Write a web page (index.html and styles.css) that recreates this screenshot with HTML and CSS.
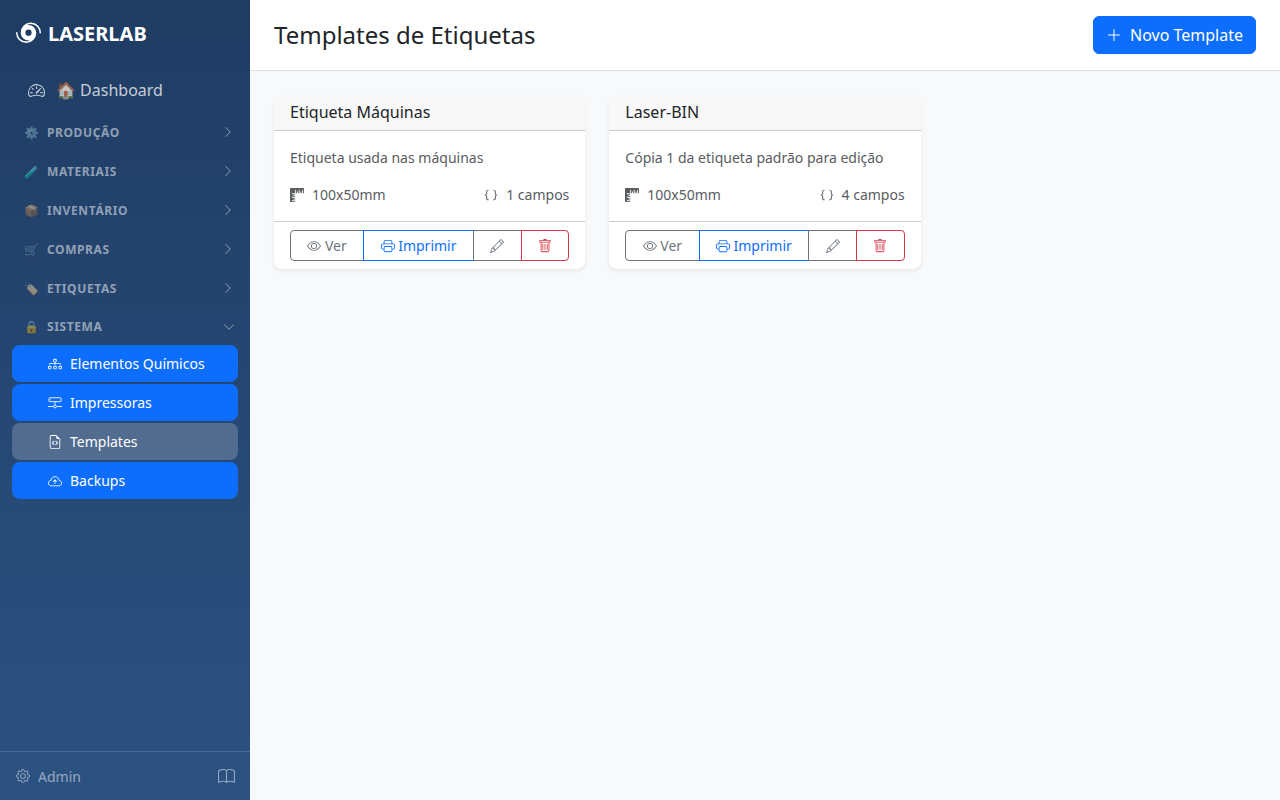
FILE: index.html
```html
<!DOCTYPE html>
<html lang="pt">
<head>
    <meta charset="UTF-8">
    <meta name="viewport" content="width=device-width, initial-scale=1.0">
    <title>Templates de Etiquetas</title>
    <link rel="stylesheet" href="styles.css">
</head>
<body>
    <svg class="icon-defs" xmlns="http://www.w3.org/2000/svg">
        <symbol id="i-hurricane" viewBox="0 0 16 16"><path d="M6.999 2.6A5.5 5.5 0 0 1 15 7.5a.5.5 0 0 0 1 0 6.5 6.5 0 1 0-13 0 5 5 0 0 0 6.001 4.9A5.5 5.5 0 0 1 1 7.5a.5.5 0 0 0-1 0 6.5 6.5 0 1 0 13 0 5 5 0 0 0-6.001-4.9M10 7.5a2 2 0 1 1-4 0 2 2 0 0 1 4 0"/></symbol>
        <symbol id="i-speedometer" viewBox="0 0 16 16"><path d="M8 4a.5.5 0 0 1 .5.5V6a.5.5 0 0 1-1 0V4.5A.5.5 0 0 1 8 4M3.732 5.732a.5.5 0 0 1 .707 0l.915.914a.5.5 0 1 1-.708.708l-.914-.915a.5.5 0 0 1 0-.707M2 10a.5.5 0 0 1 .5-.5h1.586a.5.5 0 0 1 0 1H2.5A.5.5 0 0 1 2 10m9.5 0a.5.5 0 0 1 .5-.5h1.5a.5.5 0 0 1 0 1H12a.5.5 0 0 1-.5-.5m.754-4.246a.39.39 0 0 0-.527-.02L7.547 9.31a.91.91 0 1 0 1.302 1.258l3.434-4.297a.39.39 0 0 0-.029-.518z"/><path fill-rule="evenodd" d="M0 10a8 8 0 1 1 15.547 2.661c-.442 1.253-1.845 1.602-2.932 1.25C11.309 13.488 9.475 13 8 13c-1.474 0-3.31.488-4.615.911-1.087.352-2.49.003-2.932-1.25A8 8 0 0 1 0 10m8-7a7 7 0 0 0-6.603 9.329c.203.575.923.876 1.68.63C4.397 12.533 6.358 12 8 12s3.604.532 4.923.96c.757.245 1.477-.056 1.68-.631A7 7 0 0 0 8 3"/></symbol>
        <symbol id="i-right" viewBox="0 0 16 16"><path fill-rule="evenodd" d="M4.646 1.646a.5.5 0 0 1 .708 0l6 6a.5.5 0 0 1 0 .708l-6 6a.5.5 0 0 1-.708-.708L10.293 8 4.646 2.354a.5.5 0 0 1 0-.708"/></symbol>
        <symbol id="i-down" viewBox="0 0 16 16"><path fill-rule="evenodd" d="M1.646 4.646a.5.5 0 0 1 .708 0L8 10.293l5.646-5.647a.5.5 0 0 1 .708.708l-6 6a.5.5 0 0 1-.708 0l-6-6a.5.5 0 0 1 0-.708"/></symbol>
        <symbol id="i-diagram" viewBox="0 0 16 16"><path fill-rule="evenodd" d="M6 3.5A1.5 1.5 0 0 1 7.5 2h1A1.5 1.5 0 0 1 10 3.5v1A1.5 1.5 0 0 1 8.5 6v1H14a.5.5 0 0 1 .5.5v1a.5.5 0 0 1-1 0V8h-5v.5a.5.5 0 0 1-1 0V8h-5v.5a.5.5 0 0 1-1 0v-1A.5.5 0 0 1 2 7h5.5V6A1.5 1.5 0 0 1 6 4.5zM8.5 5a.5.5 0 0 0 .5-.5v-1a.5.5 0 0 0-.5-.5h-1a.5.5 0 0 0-.5.5v1a.5.5 0 0 0 .5.5zM0 11.5A1.5 1.5 0 0 1 1.5 10h1A1.5 1.5 0 0 1 4 11.5v1A1.5 1.5 0 0 1 2.5 14h-1A1.5 1.5 0 0 1 0 12.5zm1.5-.5a.5.5 0 0 0-.5.5v1a.5.5 0 0 0 .5.5h1a.5.5 0 0 0 .5-.5v-1a.5.5 0 0 0-.5-.5zm4.5.5A1.5 1.5 0 0 1 7.5 10h1a1.5 1.5 0 0 1 1.5 1.5v1A1.5 1.5 0 0 1 8.5 14h-1A1.5 1.5 0 0 1 6 12.5zm1.5-.5a.5.5 0 0 0-.5.5v1a.5.5 0 0 0 .5.5h1a.5.5 0 0 0 .5-.5v-1a.5.5 0 0 0-.5-.5zm4.5.5a1.5 1.5 0 0 1 1.5-1.5h1a1.5 1.5 0 0 1 1.5 1.5v1a1.5 1.5 0 0 1-1.5 1.5h-1a1.5 1.5 0 0 1-1.5-1.5zm1.5-.5a.5.5 0 0 0-.5.5v1a.5.5 0 0 0 .5.5h1a.5.5 0 0 0 .5-.5v-1a.5.5 0 0 0-.5-.5z"/></symbol>
        <symbol id="i-hdd" viewBox="0 0 16 16"><g fill="none" stroke="currentColor"><rect x="1" y="2" width="14" height="4.5" rx="1"/><path d="M8 6.5V10M0 12h6M10 12h6"/><circle cx="8" cy="12" r="1.6"/></g><circle cx="3" cy="4.2" r=".6"/></symbol>
        <symbol id="i-file-code" viewBox="0 0 16 16"><path d="M14 4.5V14a2 2 0 0 1-2 2H4a2 2 0 0 1-2-2V2a2 2 0 0 1 2-2h5.5zm-3 0A1.5 1.5 0 0 1 9.5 3V1H4a1 1 0 0 0-1 1v12a1 1 0 0 0 1 1h8a1 1 0 0 0 1-1V4.5z"/><path d="M8.646 6.646a.5.5 0 0 1 .708 0l2 2a.5.5 0 0 1 0 .708l-2 2a.5.5 0 0 1-.708-.708L10.293 9 8.646 7.354a.5.5 0 0 1 0-.708m-1.292 0a.5.5 0 0 0-.708 0l-2 2a.5.5 0 0 0 0 .708l2 2a.5.5 0 0 0 .708-.708L5.707 9l1.647-1.646a.5.5 0 0 0 0-.708"/></symbol>
        <symbol id="i-cloud" viewBox="0 0 16 16"><path fill="none" stroke="currentColor" d="M4.4 13.5H3.8C2 13.5.5 12.2.5 10.4c0-1.6 1.2-2.8 2.7-3C3.5 5 5.6 3 8 3s4.5 2 4.8 4.4c1.5.2 2.7 1.4 2.7 3 0 1.8-1.5 3.1-3.3 3.1Z"/><path d="M7.65 6.15a.5.5 0 0 1 .7 0l2 2a.5.5 0 0 1-.7.7L8.5 7.71V11a.5.5 0 0 1-1 0V7.71L6.35 8.85a.5.5 0 1 1-.7-.7z"/></symbol>
        <symbol id="i-gear" viewBox="0 0 16 16"><path d="M8 4.754a3.246 3.246 0 1 0 0 6.492 3.246 3.246 0 0 0 0-6.492M5.754 8a2.246 2.246 0 1 1 4.492 0 2.246 2.246 0 0 1-4.492 0"/><path d="M9.796 1.343c-.527-1.79-3.065-1.79-3.592 0l-.094.319a.873.873 0 0 1-1.255.52l-.292-.16c-1.64-.892-3.433.902-2.54 2.541l.159.292a.873.873 0 0 1-.52 1.255l-.319.094c-1.79.527-1.79 3.065 0 3.592l.319.094a.873.873 0 0 1 .52 1.255l-.16.292c-.892 1.64.901 3.434 2.541 2.54l.292-.159a.873.873 0 0 1 1.255.52l.094.319c.527 1.79 3.065 1.79 3.592 0l.094-.319a.873.873 0 0 1 1.255-.52l.292.16c1.64.893 3.434-.902 2.54-2.541l-.159-.292a.873.873 0 0 1 .52-1.255l.319-.094c1.79-.527 1.79-3.065 0-3.592l-.319-.094a.873.873 0 0 1-.52-1.255l.16-.292c.893-1.64-.902-3.433-2.541-2.54l-.292.159a.873.873 0 0 1-1.255-.52zm-2.633.283c.246-.835 1.428-.835 1.674 0l.094.319a1.873 1.873 0 0 0 2.693 1.115l.291-.16c.764-.415 1.6.42 1.184 1.185l-.159.292a1.873 1.873 0 0 0 1.116 2.692l.318.094c.835.246.835 1.428 0 1.674l-.319.094a1.873 1.873 0 0 0-1.115 2.693l.16.291c.415.764-.42 1.6-1.185 1.184l-.291-.159a1.873 1.873 0 0 0-2.693 1.116l-.094.318c-.246.835-1.428.835-1.674 0l-.094-.319a1.873 1.873 0 0 0-2.692-1.115l-.292.16c-.764.415-1.6-.42-1.184-1.185l.159-.291A1.873 1.873 0 0 0 1.945 8.93l-.319-.094c-.835-.246-.835-1.428 0-1.674l.319-.094A1.873 1.873 0 0 0 3.06 4.377l-.16-.292c-.415-.764.42-1.6 1.185-1.184l.292.159a1.873 1.873 0 0 0 2.692-1.115z"/></symbol>
        <symbol id="i-book" viewBox="0 0 16 16"><path d="M1 2.828c.885-.37 2.154-.769 3.388-.893 1.33-.134 2.458.063 3.112.752v9.746c-.935-.53-2.12-.603-3.213-.493-1.18.12-2.37.461-3.287.811zm7.5-.141c.654-.689 1.782-.886 3.112-.752 1.234.124 2.503.523 3.388.893v9.923c-.918-.35-2.107-.692-3.287-.81-1.094-.111-2.278-.039-3.213.492zM8 1.783C7.015.936 5.587.81 4.287.94c-1.514.153-3.042.672-3.994 1.105A.5.5 0 0 0 0 2.5v11a.5.5 0 0 0 .707.455c.882-.4 2.303-.881 3.68-1.02 1.409-.142 2.59.087 3.223.877a.5.5 0 0 0 .78 0c.633-.79 1.814-1.019 3.222-.877 1.378.139 2.8.62 3.681 1.02A.5.5 0 0 0 16 13.5v-11a.5.5 0 0 0-.293-.455c-.952-.433-2.48-.952-3.994-1.105C10.413.809 8.985.936 8 1.783"/></symbol>
        <symbol id="i-plus" viewBox="0 0 16 16"><path fill-rule="evenodd" d="M8 2a.5.5 0 0 1 .5.5v5h5a.5.5 0 0 1 0 1h-5v5a.5.5 0 0 1-1 0v-5h-5a.5.5 0 0 1 0-1h5v-5A.5.5 0 0 1 8 2"/></symbol>
        <symbol id="i-rulers" viewBox="0 0 16 16"><path d="M1 0a1 1 0 0 0-1 1v14a1 1 0 0 0 1 1h5v-1H2v-1h4v-1H4v-1h2v-1H2v-1h4V9H4V8h2V7H2V6h4V2h1v4h1V4h1v2h1V2h1v4h1V4h1v2h1V2h1v4h1V1a1 1 0 0 0-1-1z"/></symbol>
        <symbol id="i-braces" viewBox="0 0 16 16"><path d="M2.114 8.063V7.9c1.005-.102 1.497-.615 1.497-1.6V4.503c0-1.094.39-1.538 1.354-1.538h.273V2h-.376C3.25 2 2.49 2.759 2.49 4.352v1.524c0 1.094-.376 1.456-1.49 1.456v1.299c1.114 0 1.49.362 1.49 1.456v1.524c0 1.593.759 2.352 2.372 2.352h.376v-.964h-.273c-.964 0-1.354-.444-1.354-1.538V9.663c0-.984-.492-1.497-1.497-1.6M13.886 7.9v.163c-1.005.103-1.497.616-1.497 1.6v1.798c0 1.094-.39 1.538-1.354 1.538h-.273v.964h.376c1.613 0 2.372-.759 2.372-2.352v-1.524c0-1.094.376-1.456 1.49-1.456V7.332c-1.114 0-1.49-.362-1.49-1.456V4.352C13.51 2.759 12.75 2 11.138 2h-.376v.964h.273c.964 0 1.354.444 1.354 1.538V6.3c0 .984.492 1.497 1.497 1.6"/></symbol>
        <symbol id="i-eye" viewBox="0 0 16 16"><path d="M16 8s-3-5.5-8-5.5S0 8 0 8s3 5.5 8 5.5S16 8 16 8M1.173 8a13 13 0 0 1 1.66-2.043C4.12 4.668 5.88 3.5 8 3.5s3.879 1.168 5.168 2.457A13 13 0 0 1 14.828 8q-.086.13-.195.288c-.335.48-.83 1.12-1.465 1.755C11.879 11.332 10.119 12.5 8 12.5s-3.879-1.168-5.168-2.457A13 13 0 0 1 1.172 8z"/><path d="M8 5.5a2.5 2.5 0 1 0 0 5 2.5 2.5 0 0 0 0-5M4.5 8a3.5 3.5 0 1 1 7 0 3.5 3.5 0 0 1-7 0"/></symbol>
        <symbol id="i-printer" viewBox="0 0 16 16"><path d="M2.5 8a.5.5 0 1 0 0-1 .5.5 0 0 0 0 1"/><path d="M5 1a2 2 0 0 0-2 2v2H2a2 2 0 0 0-2 2v3a2 2 0 0 0 2 2h1v1a2 2 0 0 0 2 2h6a2 2 0 0 0 2-2v-1h1a2 2 0 0 0 2-2V7a2 2 0 0 0-2-2h-1V3a2 2 0 0 0-2-2zM4 3a1 1 0 0 1 1-1h6a1 1 0 0 1 1 1v2H4zm1 5a2 2 0 0 0-2 2v1H2a1 1 0 0 1-1-1V7a1 1 0 0 1 1-1h12a1 1 0 0 1 1 1v3a1 1 0 0 1-1 1h-1v-1a2 2 0 0 0-2-2zm7 2v3a1 1 0 0 1-1 1H5a1 1 0 0 1-1-1v-3a1 1 0 0 1 1-1h6a1 1 0 0 1 1 1"/></symbol>
        <symbol id="i-pencil" viewBox="0 0 16 16"><path d="M12.146.146a.5.5 0 0 1 .708 0l3 3a.5.5 0 0 1 0 .708l-10 10a.5.5 0 0 1-.168.11l-5 2a.5.5 0 0 1-.65-.65l2-5a.5.5 0 0 1 .11-.168zM11.207 2.5 13.5 4.793 14.793 3.5 12.5 1.207zm1.586 3L10.5 3.207 4 9.707V10h.5a.5.5 0 0 1 .5.5v.5h.5a.5.5 0 0 1 .5.5v.5h.293zm-9.761 5.175-.106.106-1.528 3.821 3.821-1.528.106-.106A.5.5 0 0 1 5 12.5V12h-.5a.5.5 0 0 1-.5-.5V11h-.5a.5.5 0 0 1-.468-.325"/></symbol>
        <symbol id="i-trash" viewBox="0 0 16 16"><path d="M5.5 5.5A.5.5 0 0 1 6 6v6a.5.5 0 0 1-1 0V6a.5.5 0 0 1 .5-.5m2.5 0a.5.5 0 0 1 .5.5v6a.5.5 0 0 1-1 0V6a.5.5 0 0 1 .5-.5m3 .5a.5.5 0 0 0-1 0v6a.5.5 0 0 0 1 0z"/><path d="M14.5 3a1 1 0 0 1-1 1H13v9a2 2 0 0 1-2 2H5a2 2 0 0 1-2-2V4h-.5a1 1 0 0 1-1-1V2a1 1 0 0 1 1-1H6a1 1 0 0 1 1-1h2a1 1 0 0 1 1 1h3.5a1 1 0 0 1 1 1zM4.118 4 4 4.059V13a1 1 0 0 0 1 1h6a1 1 0 0 0 1-1V4.059L11.882 4zM2.5 3h11V2h-11z"/></symbol>
    </svg>

    <div class="app">
        <aside class="sidebar">
            <div class="brand">
                <svg class="brand-icon"><use href="#i-hurricane"/></svg>
                <span>LASERLAB</span>
            </div>
            <nav class="nav">
                <a class="nav-link" href="#">
                    <svg class="icon nav-link-icon"><use href="#i-speedometer"/></svg>
                    <span>🏠 Dashboard</span>
                </a>
                <div class="nav-section"><span class="nav-section-title"><span class="nav-emoji">⚙️</span>Produção</span><svg class="chevron"><use href="#i-right"/></svg></div>
                <div class="nav-section"><span class="nav-section-title"><span class="nav-emoji">🧪</span>Materiais</span><svg class="chevron"><use href="#i-right"/></svg></div>
                <div class="nav-section"><span class="nav-section-title"><span class="nav-emoji">📦</span>Inventário</span><svg class="chevron"><use href="#i-right"/></svg></div>
                <div class="nav-section"><span class="nav-section-title"><span class="nav-emoji">🛒</span>Compras</span><svg class="chevron"><use href="#i-right"/></svg></div>
                <div class="nav-section"><span class="nav-section-title"><span class="nav-emoji">🏷️</span>Etiquetas</span><svg class="chevron"><use href="#i-right"/></svg></div>
                <div class="nav-section nav-section-open"><span class="nav-section-title"><span class="nav-emoji">🔒</span>Sistema</span><svg class="chevron"><use href="#i-down"/></svg></div>
                <div class="subnav">
                    <a class="subnav-link" href="#"><svg class="icon"><use href="#i-diagram"/></svg>Elementos Químicos</a>
                    <a class="subnav-link" href="#"><svg class="icon"><use href="#i-hdd"/></svg>Impressoras</a>
                    <a class="subnav-link active" href="#"><svg class="icon"><use href="#i-file-code"/></svg>Templates</a>
                    <a class="subnav-link" href="#"><svg class="icon"><use href="#i-cloud"/></svg>Backups</a>
                </div>
            </nav>
            <div class="sidebar-footer">
                <span class="sidebar-user"><svg class="icon"><use href="#i-gear"/></svg>Admin</span>
                <svg class="book-icon"><use href="#i-book"/></svg>
            </div>
        </aside>

        <main class="main">
            <header class="topbar">
                <h1>Templates de Etiquetas</h1>
                <button class="btn-new"><svg class="icon"><use href="#i-plus"/></svg>Novo Template</button>
            </header>
            <section class="cards">
                <article class="card">
                    <div class="card-header">Etiqueta Máquinas</div>
                    <div class="card-body">
                        <p>Etiqueta usada nas máquinas</p>
                        <div class="card-meta">
                            <span class="meta-item"><svg class="icon"><use href="#i-rulers"/></svg>100x50mm</span>
                            <span class="meta-item"><svg class="icon"><use href="#i-braces"/></svg>1 campos</span>
                        </div>
                    </div>
                    <div class="card-footer">
                        <div class="btn-group">
                            <a class="btn btn-grey" href="#"><svg class="icon"><use href="#i-eye"/></svg>Ver</a>
                            <a class="btn btn-blue" href="#"><svg class="icon"><use href="#i-printer"/></svg>Imprimir</a>
                            <a class="btn btn-grey" href="#"><svg class="icon"><use href="#i-pencil"/></svg></a>
                            <a class="btn btn-red" href="#"><svg class="icon"><use href="#i-trash"/></svg></a>
                        </div>
                    </div>
                </article>
                <article class="card">
                    <div class="card-header">Laser-BIN</div>
                    <div class="card-body">
                        <p>Cópia 1 da etiqueta padrão para edição</p>
                        <div class="card-meta">
                            <span class="meta-item"><svg class="icon"><use href="#i-rulers"/></svg>100x50mm</span>
                            <span class="meta-item"><svg class="icon"><use href="#i-braces"/></svg>4 campos</span>
                        </div>
                    </div>
                    <div class="card-footer">
                        <div class="btn-group">
                            <a class="btn btn-grey" href="#"><svg class="icon"><use href="#i-eye"/></svg>Ver</a>
                            <a class="btn btn-blue" href="#"><svg class="icon"><use href="#i-printer"/></svg>Imprimir</a>
                            <a class="btn btn-grey" href="#"><svg class="icon"><use href="#i-pencil"/></svg></a>
                            <a class="btn btn-red" href="#"><svg class="icon"><use href="#i-trash"/></svg></a>
                        </div>
                    </div>
                </article>
            </section>
        </main>
    </div>
</body>
</html>
```

FILE: styles.css
```css
* {
    box-sizing: border-box;
}
body {
    margin: 0;
    font-family: 'Noto Sans', 'Noto Color Emoji', sans-serif;
    font-size: 16px;
    color: #212529;
    background-color: #f8f9fa;
}
a {
    text-decoration: none;
}
.icon-defs {
    display: none;
}
.icon {
    width: 14px;
    height: 14px;
    fill: currentColor;
    flex-shrink: 0;
}
.app {
    display: flex;
    height: 800px;
}

/* sidebar */
.sidebar {
    width: 250px;
    flex-shrink: 0;
    display: flex;
    flex-direction: column;
    background: linear-gradient(180deg, #1f3c63 0%, #2c5282 100%);
}
.brand {
    display: flex;
    align-items: center;
    gap: 7px;
    height: 66px;
    padding-left: 16px;
    font-size: 20px;
    font-weight: 700;
    color: #fff;
}
.brand-icon {
    width: 25px;
    height: 25px;
    fill: currentColor;
}
.nav {
    flex: 1;
    padding-top: 5px;
}
.nav-link {
    display: flex;
    align-items: center;
    gap: 11px;
    height: 38px;
    padding-left: 28px;
    margin-bottom: 4px;
    color: rgba(255, 255, 255, 0.75);
}
.nav-link-icon {
    width: 17px;
    height: 17px;
}
.nav-section {
    display: flex;
    align-items: center;
    justify-content: space-between;
    height: 39px;
    padding: 0 16px 0 24px;
    color: rgba(255, 255, 255, 0.5);
}
.nav-section-title {
    font-size: 12px;
    font-weight: 700;
    letter-spacing: 0.6px;
    text-transform: uppercase;
}
.nav-emoji {
    display: inline-block;
    width: 23px;
    letter-spacing: 0;
}
.chevron {
    width: 12px;
    height: 12px;
    margin-bottom: 2px;
    fill: currentColor;
}
.nav-section-open {
    height: 37px;
    padding-right: 15px;
}
.nav-section-open .chevron {
    margin-bottom: 0;
}
.subnav {
    display: flex;
    flex-direction: column;
    gap: 2px;
    padding: 0 12px;
}
.subnav-link {
    display: flex;
    align-items: center;
    gap: 8px;
    height: 37px;
    padding-left: 36px;
    border-radius: 8px;
    font-size: 14px;
    color: #fff;
    background-color: #0d6efd;
}
.subnav-link.active {
    background-color: rgba(255, 255, 255, 0.2);
}
.sidebar-footer {
    display: flex;
    align-items: center;
    justify-content: space-between;
    height: 49px;
    padding: 0 15px 0 16px;
    border-top: 1px solid rgba(255, 255, 255, 0.15);
    color: rgba(255, 255, 255, 0.5);
}
.sidebar-user {
    display: flex;
    align-items: center;
    gap: 8px;
    font-size: 14px;
}
.book-icon {
    width: 17px;
    height: 17px;
    fill: currentColor;
}

/* main */
.main {
    flex: 1;
    min-width: 0;
}
.topbar {
    display: flex;
    align-items: center;
    justify-content: space-between;
    height: 71px;
    padding: 0 24px;
    background-color: #fff;
    border-bottom: 1px solid #dee2e6;
}
.topbar h1 {
    margin: 0 0 2px;
    font-size: 24px;
    font-weight: 400;
}
.btn-new {
    display: flex;
    align-items: center;
    gap: 8px;
    height: 38px;
    padding: 0 12px;
    border: 1px solid #0d6efd;
    border-radius: 6px;
    font: inherit;
    color: #fff;
    background-color: #0d6efd;
}
.btn-new .icon {
    width: 16px;
    height: 16px;
}
.cards {
    display: grid;
    grid-template-columns: repeat(3, 1fr);
    gap: 24px;
    align-items: start;
    padding: 25px 24px;
}
.card {
    background-color: #fff;
    border-radius: 8px;
    box-shadow: 0 2px 4px rgba(0, 0, 0, 0.075);
    overflow: hidden;
}
.card-header {
    height: 35px;
    padding: 0 16px;
    line-height: 32px;
    font-weight: 400;
    background-color: #f8f8f8;
    border-bottom: 1px solid #ccc;
}
.card-body {
    padding: 16px;
    font-size: 14px;
    color: #595c5f;
}
.card-body p {
    margin: 0 0 16px;
    line-height: 21px;
}
.card-meta {
    display: flex;
    justify-content: space-between;
    line-height: 21px;
}
.meta-item {
    display: flex;
    align-items: center;
    gap: 8px;
}
.card-footer {
    padding: 8px 16px;
    border-top: 1px solid #ccc;
}
.btn-group {
    display: flex;
}
.btn {
    flex: 1 1 auto;
    display: flex;
    align-items: center;
    justify-content: center;
    gap: 3.64px;
    height: 31px;
    padding: 0 16px;
    margin-left: -1px;
    border: 1px solid;
    font-size: 14px;
}
.btn:first-child {
    margin-left: 0;
    border-radius: 4px 0 0 4px;
}
.btn:last-child {
    border-radius: 0 4px 4px 0;
}
.btn-grey {
    color: #6c757d;
    border-color: #6c757d;
}
.btn-blue {
    color: #0d6efd;
    border-color: #0d6efd;
}
.btn-red {
    color: #dc3545;
    border-color: #dc3545;
}
```
